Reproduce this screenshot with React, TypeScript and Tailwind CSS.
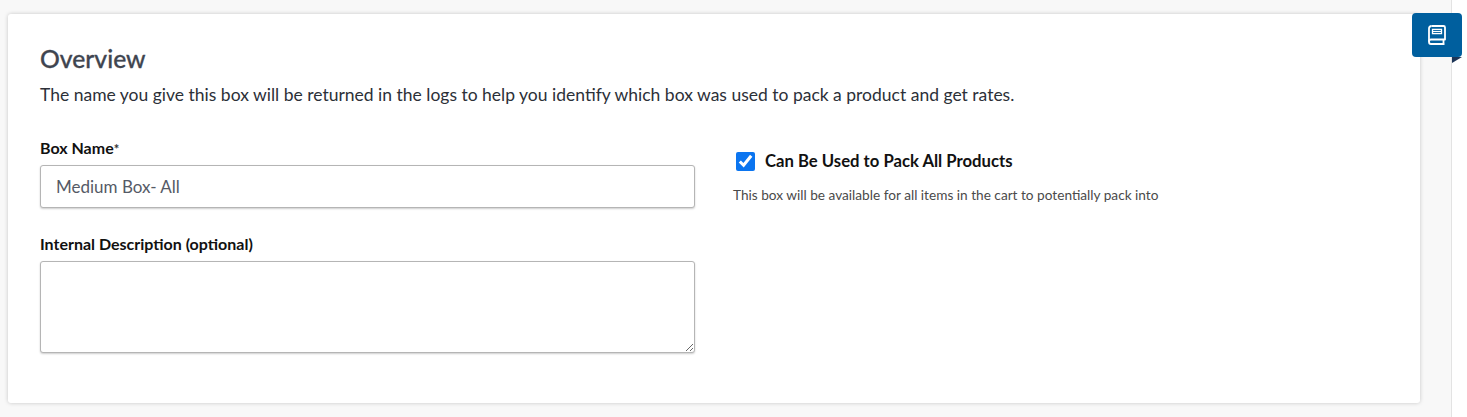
import React from 'react';

const font = "font-['Lato','Liberation_Sans',sans-serif]";

function BookIcon() {
  return (
    <svg width="18" height="20" viewBox="0 0 18 20" fill="none" stroke="white" strokeWidth="1.800">
      <path d="M3.500 1H15.500C16.300 1 17 1.700 17 2.500V14.500H3C1.800 14.500 1 15.500 1 16.700S1.800 19 3 19H16.500M15.500 15V18.500" strokeLinejoin="round" />
      <path d="M1 16.700V3.500C1 2 2 1 3.500 1" />
      <path d="M4.500 4.300h9v4.400h-9z" strokeWidth="1.300" />
      <path d="M5 6.500h8" strokeWidth="1.200" />
    </svg>
  );
}

export default function App() {
  return (
    <div className={`${font} h-[417px] w-full overflow-hidden bg-[#f8f8f8] flex`}>
      <div className="flex-1 min-w-0 pt-[14px] pl-2 pr-[31px]">
        <section className="h-[389px] bg-white rounded-[3px] shadow-[0_0_4px_rgba(0,0,0,0.2)] pt-[30px] pl-8 pr-8">
          <h2 className="text-[24.700px] leading-[30px] font-medium text-[#3f4550] [-webkit-text-stroke:0.3px_#3f4550]">Overview</h2>
          <p className="mt-[9px] text-[17.500px] leading-[24px] text-[#2c3038]">
            The name you give this box will be returned in the logs to help you identify which box was used to pack a product and get rates.
          </p>
          <div className="mt-[31px] flex">
            <div className="w-[655px] shrink-0">
              <label className="block h-5 text-[16px] leading-[20px] font-bold text-[#111]">
                Box Name<span className="font-bold text-[13px] leading-none text-[#333]">*</span>
              </label>
              <input
                readOnly
                value="Medium Box- All"
                className="mt-[7px] block w-full h-[43px] px-[15px] text-[17px] text-[#555a66] bg-white border border-[#b5b5b5] rounded-[3px] shadow-[0_1px_2px_rgba(0,0,0,0.2)] outline-none"
              />
              <label className="mt-[26px] block text-[16px] leading-[20px] font-bold text-[#111]">
                Internal Description (optional)
              </label>
              <textarea
                readOnly
                className="mt-[7px] block w-full h-[92px] bg-white border border-[#b5b5b5] rounded-[3px] shadow-[0_1px_2px_rgba(0,0,0,0.2)] outline-none"
              />
            </div>
            <div className="ml-[38px] pt-[12px]">
              <label className="flex items-center">
                <input type="checkbox" readOnly checked className="ml-[3px] w-[19px] h-[19px] accent-[#0b75f0]" />
                <span className="ml-[10px] text-[16.700px] leading-[22px] font-bold text-[#111]">Can Be Used to Pack All Products</span>
              </label>
              <p className="mt-[13px] text-[13.650px] leading-[20px] text-[#4a4a4a]">
                This box will be available for all items in the cart to potentially pack into
              </p>
            </div>
          </div>
        </section>
      </div>
      <aside className="relative w-4 shrink-0 bg-white border-l border-[#e3e3e3]">
        <button className="absolute left-[-40px] top-[13px] w-[50px] h-[44px] bg-[#005f9e] rounded-[4px] flex items-center justify-center">
          <BookIcon />
        </button>
        <div className="absolute left-0 top-[57px] w-0 h-0 border-t-[6px] border-t-[#1d3557] border-r-[10px] border-r-transparent" />
      </aside>
    </div>
  );
}
